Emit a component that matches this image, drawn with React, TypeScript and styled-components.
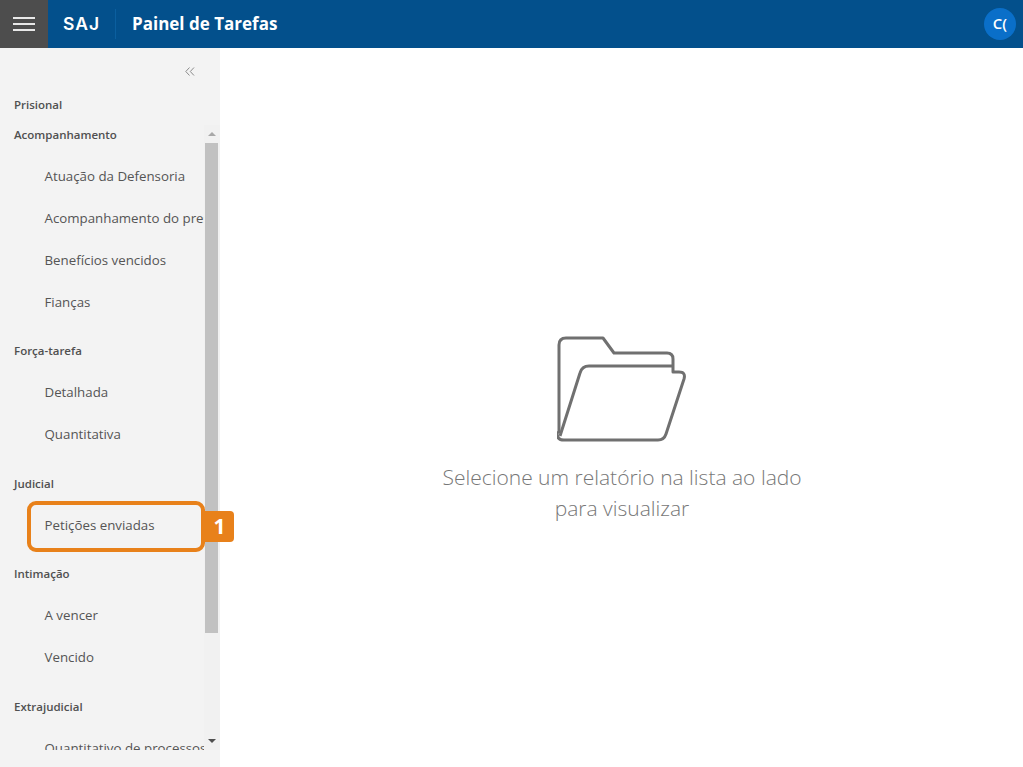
import React from "react";
import styled, { createGlobalStyle } from "styled-components";

const Global = createGlobalStyle`
  html, body {
    margin: 0;
    height: 100%;
    overflow: hidden;
    background: #fff;
    font-family: "Open Sans", "Liberation Sans", sans-serif;
  }
`;

const Page = styled.div`
  display: flex;
  flex-direction: column;
  width: 1023px;
  height: 767px;
`;

const Header = styled.header`
  display: flex;
  align-items: center;
  height: 48px;
  flex: none;
  background: #03508c;
  color: #fff;
  padding-right: 7px;
`;

const MenuButton = styled.div`
  display: flex;
  flex-direction: column;
  justify-content: center;
  gap: 4px;
  width: 48px;
  height: 48px;
  padding: 0 13px 1px;
  box-sizing: border-box;
  background: #4d4d4d;
  span {
    display: block;
    height: 2px;
    background: #e8e8e8;
  }
`;

const Brand = styled.div`
  margin-left: 15px;
  width: 52px;
  height: 30px;
  line-height: 30px;
  font-family: Inter, "Open Sans", sans-serif;
  font-size: 17.5px;
  font-weight: 600;
  letter-spacing: 1px;
  border-right: 1px solid #0b5f9f;
`;

const Title = styled.div`
  margin: 0 0 2px 16px;
  flex: 1;
  font-size: 17px;
  font-weight: 700;
`;

const Avatar = styled.div`
  width: 32px;
  height: 32px;
  padding-bottom: 2px;
  box-sizing: border-box;
  border-radius: 50%;
  background: #0a6fc9;
  display: flex;
  align-items: center;
  justify-content: center;
  font-size: 15px;
  font-weight: 600;
`;

const Body = styled.div`
  display: flex;
  flex: 1;
  min-height: 0;
`;

const Sidebar = styled.aside`
  width: 220px;
  flex: none;
  background: #f3f3f3;
  display: flex;
  flex-direction: column;
`;

const CollapseRow = styled.div`
  display: flex;
  justify-content: flex-end;
  height: 47px;
  padding: 19px 25px 0 0;
  box-sizing: border-box;
  color: #8a8a8a;
`;

const TopHeading = styled.div`
  font-size: 11.5px;
  font-weight: 600;
  color: #505050;
  line-height: 20px;
  padding-left: 14px;
  height: 30px;
`;

const ScrollArea = styled.div`
  display: flex;
  height: 625px;
  flex: none;
  position: relative;
`;

const List = styled.div`
  flex: 1;
  min-width: 0;
  overflow: hidden;
`;

const Heading = styled.div<{ $first?: boolean }>`
  font-size: 11.5px;
  font-weight: 600;
  color: #505050;
  line-height: 20px;
  padding-left: 14px;
  margin: ${(p) => (p.$first ? "0" : "18.4px")} 0 10px;
`;

const Item = styled.div`
  height: 42px;
  line-height: 42px;
  padding-left: 44.5px;
  font-size: 13.3px;
  color: #555;
  white-space: nowrap;
  overflow: hidden;
`;

const Highlight = styled.div`
  position: absolute;
  left: 27px;
  top: 376px;
  width: 178px;
  height: 51px;
  box-sizing: border-box;
  border: 4px solid #e8811a;
  border-radius: 9px;
`;

const Badge = styled.div`
  position: absolute;
  left: 205px;
  top: 386px;
  width: 29px;
  height: 31px;
  background: #e8811a;
  border-radius: 0 4px 4px 0;
  color: #fff;
  font-size: 21px;
  font-weight: 700;
  line-height: 31px;
  text-align: center;
`;

const Scrollbar = styled.div`
  width: 16px;
  flex: none;
  box-sizing: border-box;
  padding: 0 2px 0 1px;
  display: flex;
  flex-direction: column;
  background: #f1f1f1;
`;

const ArrowBox = styled.div`
  height: 18px;
  flex: none;
  display: flex;
  align-items: center;
  justify-content: center;
`;

const Arrow = styled.div<{ $up?: boolean }>`
  width: 0;
  height: 0;
  border-left: 4px solid transparent;
  border-right: 4px solid transparent;
  ${(p) => (p.$up ? "border-bottom: 4px solid #a8a8a8;" : "border-top: 4px solid #505050;")}
`;

const Thumb = styled.div`
  height: 490px;
  flex: none;
  background: #c1c1c1;
`;

const Spacer = styled.div`
  flex: 1;
`;

const Main = styled.main`
  flex: 1;
  display: flex;
  flex-direction: column;
  align-items: center;
  padding: 288px 0 0 1px;
  color: #777;
`;

const Message = styled.p`
  margin: 20px 0 0;
  font-size: 21px;
  font-weight: 300;
  line-height: 31px;
  text-align: center;
`;

const groups = [
  { title: "Acompanhamento", items: ["Atuação da Defensoria", "Acompanhamento do presídio", "Benefícios vencidos", "Fianças"] },
  { title: "Força-tarefa", items: ["Detalhada", "Quantitativa"] },
  { title: "Judicial", items: ["Petições enviadas"] },
  { title: "Intimação", items: ["A vencer", "Vencido"] },
  { title: "Extrajudicial", items: ["Quantitativo de processos"] },
];

function FolderIcon() {
  return (
    <svg width="130" height="106" viewBox="557 336 130 106" fill="none" stroke="#707070" strokeWidth="3" strokeLinejoin="round">
      <path d="M559 432V345q0-7 7-7h37l11 15h53q6 0 6 6v13h6q7 0 5 7l-18 55q-2 6-8 6h-94q-7 0-7-7z" />
      <path d="M560 436l20-63q2-7 9-7h84" />
    </svg>
  );
}

function CollapseIcon() {
  return (
    <svg width="10" height="9" viewBox="0 0 10 9" fill="none" stroke="currentColor" strokeWidth="1">
      <path d="M4.5 0.5L0.8 4.5l3.7 4M9 0.5L5.3 4.5l3.7 4" />
    </svg>
  );
}

export default function App() {
  return (
    <Page>
      <Global />
      <Header>
        <MenuButton>
          <span />
          <span />
          <span />
        </MenuButton>
        <Brand>SAJ</Brand>
        <Title>Painel de Tarefas</Title>
        <Avatar>C(</Avatar>
      </Header>
      <Body>
        <Sidebar>
          <CollapseRow>
            <CollapseIcon />
          </CollapseRow>
          <TopHeading>Prisional</TopHeading>
          <ScrollArea>
            <List>
              {groups.map((g, i) => (
                <div key={g.title}>
                  <Heading $first={i === 0}>{g.title}</Heading>
                  {g.items.map((it) => (
                    <Item key={it}>{it}</Item>
                  ))}
                </div>
              ))}
            </List>
            <Scrollbar>
              <ArrowBox>
                <Arrow $up />
              </ArrowBox>
              <Thumb />
              <Spacer />
              <ArrowBox>
                <Arrow />
              </ArrowBox>
            </Scrollbar>
            <Highlight />
            <Badge>1</Badge>
          </ScrollArea>
        </Sidebar>
        <Main>
          <FolderIcon />
          <Message>
            Selecione um relatório na lista ao lado
            <br />
            para visualizar
          </Message>
        </Main>
      </Body>
    </Page>
  );
}
